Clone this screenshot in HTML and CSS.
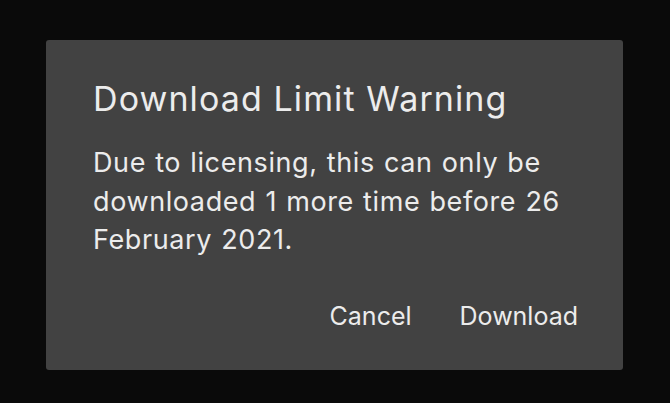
FILE: index.html
```html
<!DOCTYPE html>
<html>
<head>
<meta charset="utf-8">
<link rel="stylesheet" href="styles.css">
</head>
<body>
<div class="screen">
  <div class="dialog">
    <h1 class="title">Download Limit Warning</h1>
    <p class="message">Due to licensing, this can only be downloaded 1 more time before 26 February 2021.</p>
    <div class="actions">
      <button class="btn">Cancel</button>
      <button class="btn">Download</button>
    </div>
  </div>
</div>
</body>
</html>
```
FILE: styles.css
```css
html, body {
  margin: 0;
  padding: 0;
  background: #0a0a0a;
}
.screen {
  width: 670px;
  height: 403px;
  padding: 40px 47px 0 46px;
  box-sizing: border-box;
}
.dialog {
  width: 577px;
  height: 330px;
  box-sizing: border-box;
  background: #424242;
  border-radius: 3px;
  padding: 0 45px 0 47px;
  font-family: Inter, "Liberation Sans", sans-serif;
  color: #ececec;
  display: flex;
  flex-direction: column;
}
.title {
  margin: 37px 0 0 0;
  font-size: 34px;
  font-weight: 400;
  letter-spacing: 1.1px;
  line-height: 44px;
}
.message {
  margin: 23px 0 0 0;
  font-size: 27px;
  letter-spacing: 0.6px;
  word-spacing: 1px;
  line-height: 38.6px;
}
.actions {
  display: flex;
  justify-content: flex-end;
  gap: 48px;
  margin-top: 37px;
}
.btn {
  background: none;
  border: none;
  padding: 0;
  color: #ececec;
  font-family: inherit;
  font-size: 25px;
  line-height: 38px;
}
```
